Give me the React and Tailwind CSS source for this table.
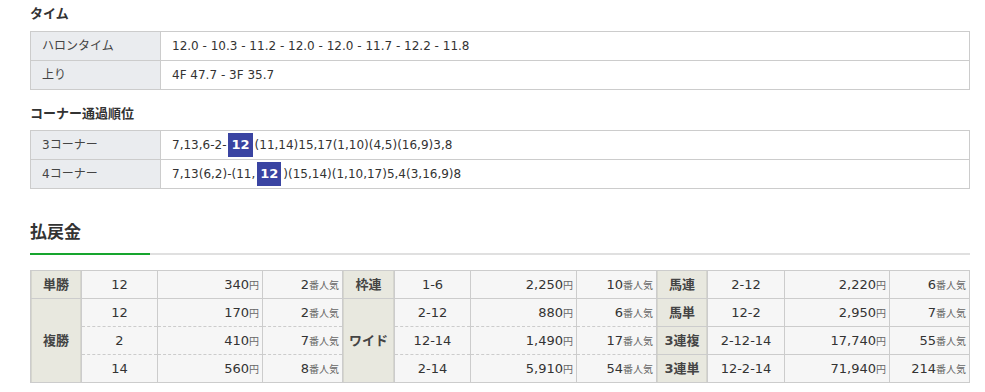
import React from 'react';

const font = "font-['DejaVu_Sans','Noto_Sans_CJK_JP',sans-serif]";

function Num({ n }) {
  return (
    <span className="inline-block px-[3px] mx-[2px] h-[24px] leading-[24px] text-[13px] bg-[#3a44a2] text-white font-bold align-middle">{n}</span>
  );
}

function InfoTable({ rows }) {
  return (
    <table className="w-[940px] border-collapse text-[12px] text-[#333]">
      <tbody>
        {rows.map((r, i) => (
          <tr key={i} className="h-[29px]">
            <td className="w-[130px] border border-[#ccc] bg-[#eaecef] px-[11px] py-0 text-[#444]">{r[0]}</td>
            <td className="border border-[#ccc] bg-white px-[11px] py-0">{r[1]}</td>
          </tr>
        ))}
      </tbody>
    </table>
  );
}

const payout = [
  [['単勝', 1], ['12', '340', '2'], ['枠連', 1], ['1-6', '2,250', '10'], ['馬連', 1], ['2-12', '2,220', '6']],
  [['複勝', 3], ['12', '170', '2'], ['ワイド', 3], ['2-12', '880', '6'], ['馬単', 1], ['12-2', '2,950', '7']],
  [null, ['2', '410', '7'], null, ['12-14', '1,490', '17'], ['3連複', 1], ['2-12-14', '17,740', '55']],
  [null, ['14', '560', '8'], null, ['2-14', '5,910', '54'], ['3連単', 1], ['12-2-14', '71,940', '214']],
];

function HeadCell({ label, span }) {
  return (
    <td
      rowSpan={span}
      className="border border-[#ccc] bg-[#e8e8df] text-center font-bold text-[#444] text-[13px] p-0 shadow-[inset_1px_0_0_#d6d6ce,inset_-1px_0_0_#d6d6ce]"
    >
      {label}
    </td>
  );
}

function DataCells({ d, dashTop, dashBottom }) {
  const dash = `${dashTop ? '[border-top-style:dashed]' : ''} ${dashBottom ? '[border-bottom-style:dashed]' : ''}`;
  return (
    <>
      <td className={`border border-[#ccc] bg-[#f6f6f6] text-center p-0 ${dash}`}>{d[0]}</td>
      <td className={`border border-[#ccc] bg-[#f6f6f6] text-right pr-[3px] p-0 ${dash}`}>
        {d[1]}<span className="text-[10px] text-[#666]">円</span>
      </td>
      <td className={`border border-[#ccc] bg-[#f6f6f6] text-right pr-[3px] p-0 ${dash}`}>
        {d[2]}<span className="text-[10px] text-[#666]">番人気</span>
      </td>
    </>
  );
}

function App() {
  return (
    <div className={`min-h-screen bg-white ${font} text-[#333] px-[30px]`}>
      <div className="w-[940px]">
        <div className="pt-[5px] h-[31px] text-[13px] leading-[18px] font-bold text-[#333]">タイム</div>
        <InfoTable
          rows={[
            ['ハロンタイム', '12.0 - 10.3 - 11.2 - 12.0 - 12.0 - 11.7 - 12.2 - 11.8'],
            ['上り', '4F 47.7 - 3F 35.7'],
          ]}
        />
        <div className="pt-[15px] h-[40px] text-[13px] leading-[18px] font-bold text-[#333]">コーナー通過順位</div>
        <InfoTable
          rows={[
            ['3コーナー', <>7,13,6-2-<Num n="12" />(11,14)15,17(1,10)(4,5)(16,9)3,8</>],
            ['4コーナー', <>7,13(6,2)-(11,<Num n="12" />)(15,14)(1,10,17)5,4(3,16,9)8</>],
          ]}
        />
        <div className="h-[64px] flex items-end pb-[9px]">
          <h2 className="text-[17px] leading-[24px] font-bold text-[#333]">払戻金</h2>
        </div>
        <div className="h-[2px] bg-[#e0e0e0] flex">
          <div className="w-[120px] bg-[#16a52e]"></div>
        </div>
        <div className="h-[15px]"></div>
        <table className="w-[940px] border-collapse text-[13px] text-[#333] table-fixed">
          <colgroup>
            <col className="w-[51px]" /><col className="w-[76px]" /><col className="w-[105px]" /><col className="w-[80px]" />
            <col className="w-[52px]" /><col className="w-[76px]" /><col className="w-[106px]" /><col className="w-[80px]" />
            <col className="w-[51px]" /><col className="w-[77px]" /><col className="w-[105px]" /><col className="w-[80px]" />
          </colgroup>
          <tbody>
            {payout.map((r, i) => (
              <tr key={i} className="h-[28px]">
                {r[0] && <HeadCell label={r[0][0]} span={r[0][1]} />}
                <DataCells d={r[1]} dashTop={i >= 2} dashBottom={i === 1 || i === 2} />
                {r[2] && <HeadCell label={r[2][0]} span={r[2][1]} />}
                <DataCells d={r[3]} dashTop={i >= 2} dashBottom={i === 1 || i === 2} />
                <HeadCell label={r[4][0]} span={1} />
                <DataCells d={r[5]} />
              </tr>
            ))}
          </tbody>
        </table>
      </div>
    </div>
  );
}

export default App;
